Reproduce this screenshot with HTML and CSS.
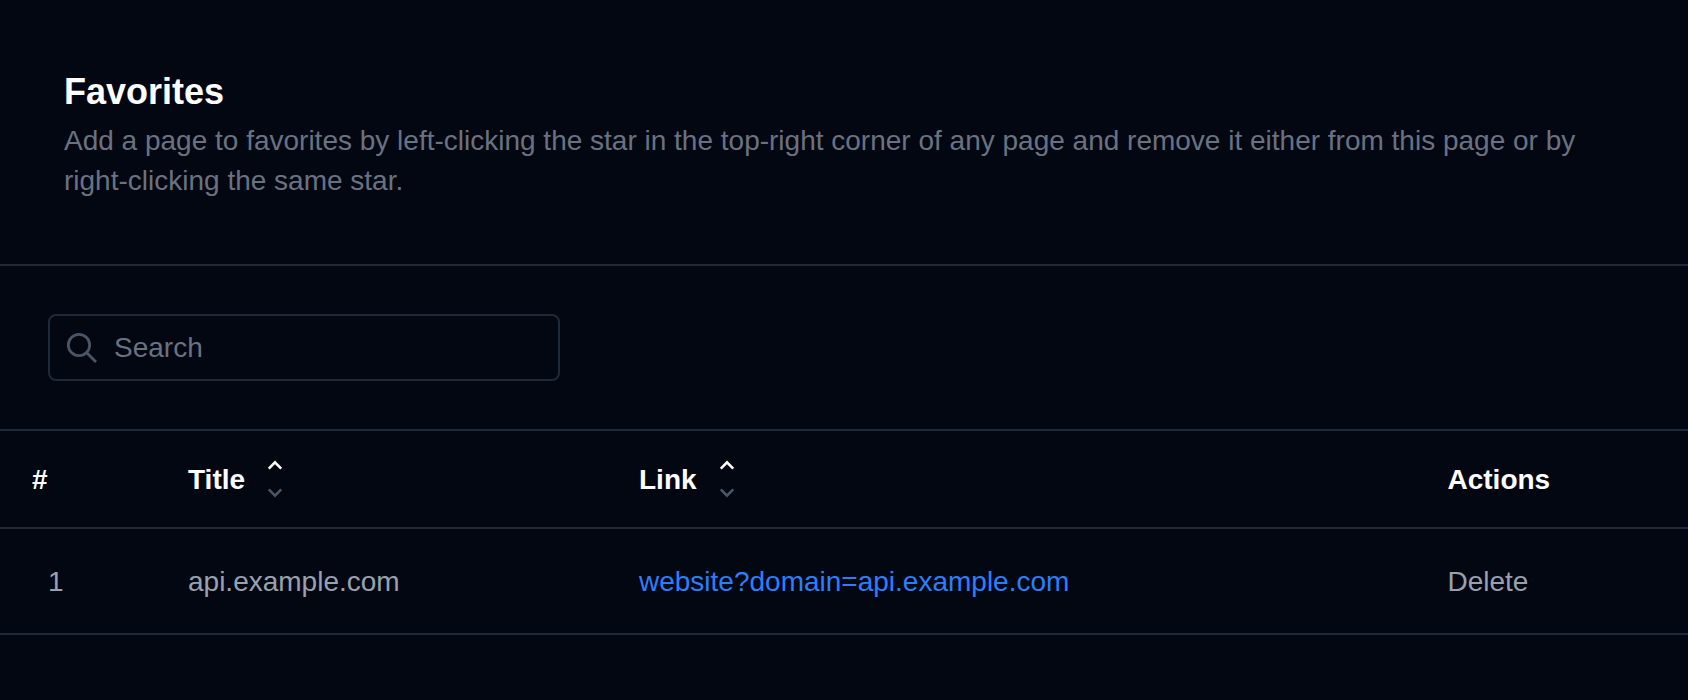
FILE: index.html
```html
<!DOCTYPE html>
<html lang="en">
<head>
<meta charset="UTF-8">
<meta name="viewport" content="width=device-width, initial-scale=1.0">
<title>Favorites</title>
<link rel="stylesheet" href="styles.css">
</head>
<body>
	<header class="page-header">
		<h1>Favorites</h1>
		<p>Add a page to favorites by left-clicking the star in the top-right corner of any page and remove it either from this page or by right-clicking the same star.</p>
	</header>

	<div class="search-bar">
		<label class="search-box">
			<svg class="search-icon" viewBox="0 0 32 32" fill="none" stroke="currentColor" stroke-width="2.8">
				<circle cx="13" cy="13" r="10.67"></circle>
				<line x1="21" y1="21" x2="30" y2="30"></line>
			</svg>
			<input type="text" placeholder="Search">
		</label>
	</div>

	<table class="favorites">
		<colgroup>
			<col class="col-index">
			<col class="col-title">
			<col class="col-link">
			<col>
		</colgroup>
		<thead>
			<tr>
				<th>#</th>
				<th>
					<span class="sortable">Title
						<span class="sort-arrows">
							<svg class="arrow-up" viewBox="0 0 16 10" fill="none" stroke="currentColor" stroke-width="2.6"><path d="M1.8 8.6L8 2.4l6.2 6.2"></path></svg>
							<svg class="arrow-down" viewBox="0 0 16 10" fill="none" stroke="currentColor" stroke-width="2.6"><path d="M1.8 1.4L8 7.6l6.2-6.2"></path></svg>
						</span>
					</span>
				</th>
				<th>
					<span class="sortable">Link
						<span class="sort-arrows">
							<svg class="arrow-up" viewBox="0 0 16 10" fill="none" stroke="currentColor" stroke-width="2.6"><path d="M1.8 8.6L8 2.4l6.2 6.2"></path></svg>
							<svg class="arrow-down" viewBox="0 0 16 10" fill="none" stroke="currentColor" stroke-width="2.6"><path d="M1.8 1.4L8 7.6l6.2-6.2"></path></svg>
						</span>
					</span>
				</th>
				<th>Actions</th>
			</tr>
		</thead>
		<tbody>
			<tr>
				<td class="row-index">1</td>
				<td>api.example.com</td>
				<td><a href="#">website?domain=api.example.com</a></td>
				<td>Delete</td>
			</tr>
		</tbody>
	</table>
</body>
</html>
```

FILE: styles.css
```css
body {
	font-family: "Liberation Sans", Arial, sans-serif;
	margin: 0;
	padding: 0;
	background-color: #030712;
	color: #99a1af;
	font-size: 28px;
	line-height: 40px;
}

.page-header {
	padding: 72px 64px 63px;
	border-bottom: 2px solid #1e2939;
}

.page-header h1 {
	margin: 0 0 9px;
	font-size: 36px;
	line-height: 40px;
	font-weight: bold;
	color: white;
}

.page-header p {
	margin: 0;
	color: #6a7282;
}

.search-bar {
	padding: 48px;
}

.search-box {
	display: flex;
	align-items: center;
	gap: 16px;
	width: 512px;
	height: 67px;
	box-sizing: border-box;
	padding: 1px 16px 0;
	border: 2px solid #1e2939;
	border-radius: 8px;
	color: #4a5565;
}

.search-icon {
	width: 32px;
	height: 32px;
	flex-shrink: 0;
}

.search-box input {
	flex: 1;
	min-width: 0;
	padding: 0;
	border: none;
	outline: none;
	background: transparent;
	font-family: inherit;
	font-size: 28px;
	color: #99a1af;
}

.search-box input::placeholder {
	color: #6a7282;
	opacity: 1;
}

.favorites {
	width: 100%;
	table-layout: fixed;
	border-collapse: collapse;
	border-top: 2px solid #1e2939;
}

.col-index {
	width: 156px;
}

.col-title {
	width: 451px;
}

.col-link {
	width: 808.5px;
}

.favorites th {
	height: 98px;
	padding: 2px 32px 0;
	box-sizing: border-box;
	border-bottom: 2px solid #1e2939;
	text-align: left;
	font-weight: bold;
	color: white;
}

.favorites td {
	height: 106px;
	padding: 2px 32px 0;
	box-sizing: border-box;
	border-bottom: 2px solid #1e2939;
}

.favorites td.row-index {
	padding-left: 48px;
}

.favorites a {
	color: #2b7fff;
	text-decoration: none;
}

.sortable {
	display: inline-flex;
	align-items: center;
	gap: 22px;
}

.sort-arrows {
	display: flex;
	flex-direction: column;
	gap: 18px;
	margin-bottom: 2px;
}

.sort-arrows svg {
	display: block;
	width: 16px;
	height: 10px;
}

.arrow-up {
	color: white;
}

.arrow-down {
	color: #4a5565;
}
```
